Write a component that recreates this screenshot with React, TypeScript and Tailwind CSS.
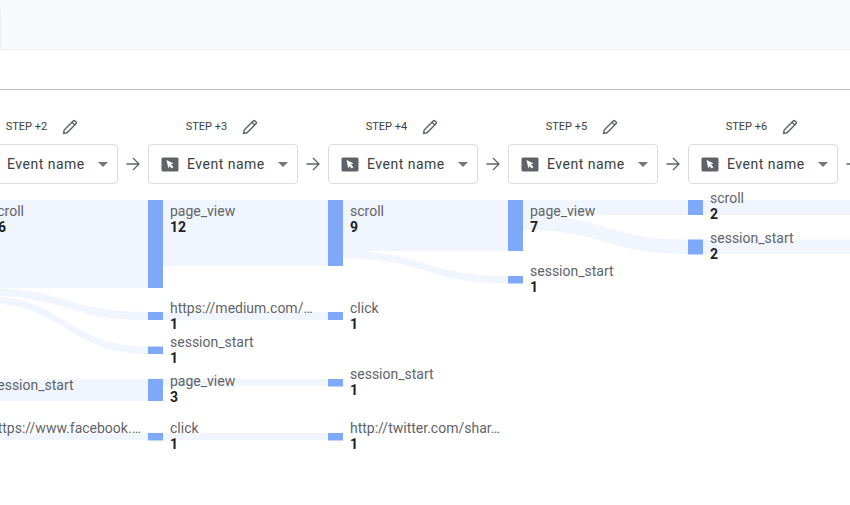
import React from 'react';

const steps = ['STEP +2', 'STEP +3', 'STEP +4', 'STEP +5', 'STEP +6'];

// x, y0 left, y1 left, y0 right, y1 right - all in page coordinates
const flows = [
  [-17, 200, 288, 148, 200, 288],
  [-17, 288, 295.5, 148, 312, 320],
  [-17, 295.5, 303, 148, 346.5, 354],
  [-17, 379, 401, 148, 379, 401],
  [-17, 433, 440, 148, 433, 440],
  [163, 200, 266, 328, 200, 266],
  [163, 312, 320, 328, 312, 320],
  [163, 379, 386, 328, 379, 386],
  [163, 433, 440, 328, 433, 440],
  [343, 200, 251, 508, 200, 251],
  [343, 251, 258.5, 508, 276, 283.5],
  [523, 200, 215, 688, 200, 215],
  [523, 215, 230, 688, 239.5, 254],
  [703, 200, 215, 868, 200, 215],
  [703, 239.5, 254, 868, 239.5, 254],
];

const nodes = [
  [148, 200, 88],
  [148, 312, 8],
  [148, 346.5, 7.5],
  [148, 379, 22],
  [148, 433, 7.5],
  [328, 200, 66],
  [328, 312, 8],
  [328, 379, 7.5],
  [328, 433, 7.5],
  [508, 200, 51],
  [508, 276, 7.5],
  [688, 200, 15],
  [688, 239.5, 15],
];

const labels: [number, number, string, string][] = [
  [-10, 211, 'scroll', '16'],
  [-10, 385, 'session_start', '3'],
  [-10, 428, 'https://www.facebook.…', '1'],
  [170, 211, 'page_view', '12'],
  [170, 308, 'https://medium.com/…', '1'],
  [170, 342, 'session_start', '1'],
  [170, 381, 'page_view', '3'],
  [170, 428, 'click', '1'],
  [350, 211, 'scroll', '9'],
  [350, 308, 'click', '1'],
  [350, 374, 'session_start', '1'],
  [350, 428, 'http://twitter.com/shar…', '1'],
  [530, 211, 'page_view', '7'],
  [530, 271, 'session_start', '1'],
  [710, 198, 'scroll', '2'],
  [710, 238, 'session_start', '2'],
];

function flowPath([x0, a0, a1, x1, b0, b1]: number[]) {
  const mid = (x0 + x1) / 2;
  return `M${x0} ${a0}C${mid} ${a0} ${mid} ${b0} ${x1} ${b0}L${x1} ${b1}C${mid} ${b1} ${mid} ${a1} ${x0} ${a1}Z`;
}

function PencilIcon() {
  return (
    <svg viewBox="0 0 16 16" className="mt-[2px] h-[16px] w-[16px] fill-none stroke-[#5f6368] stroke-[1.4]">
      <path d="M1.6 14.4L2.2 11L11.4 1.8C11.8 1.4 12.3 1.4 12.7 1.8L14.2 3.3C14.6 3.7 14.6 4.2 14.2 4.6L5 13.8Z" />
      <path d="M10 3.2L12.8 6" />
    </svg>
  );
}

function CursorIcon() {
  return (
    <svg viewBox="0 0 18 15" className="h-[15px] w-[18px]">
      <rect x="0.5" y="0.5" width="17" height="14" rx="1.5" fill="#5f6368" />
      <path d="M5.5 3L12.5 6.4L9.9 7.4L12.4 10L10.8 11.5L8.5 9L7.3 11.5Z" fill="#fff" />
    </svg>
  );
}

function ArrowIcon() {
  return (
    <svg viewBox="0 0 14 14" className="h-[14px] w-[14px] fill-none stroke-[#5f6368] stroke-[1.3]">
      <path d="M0.5 7H13M7 1L13 7L7 13" />
    </svg>
  );
}

function StepColumn({ label }: { label: string }) {
  return (
    <div className="flex flex-none">
      <div className="flex w-[150px] flex-col">
        <div className="flex h-[24px] items-center justify-center gap-[15px] pr-[2px]">
          <span className="mt-[2px] text-[11px] text-[#3c4043]">{label}</span>
          <PencilIcon />
        </div>
        <div className="mt-[6px] flex h-[40px] items-center rounded-[4px] border border-[#dadce0] bg-white pl-[12px] pr-[9px]">
          <CursorIcon />
          <span className="ml-[8px] flex-1 text-[14px] tracking-[0.5px] text-[#3c4043]">Event name</span>
          <span className="h-0 w-0 border-x-[5px] border-t-[5px] border-x-transparent border-t-[#757575]" />
        </div>
      </div>
      <div className="flex h-[40px] w-[30px] items-center justify-center self-end">
        <ArrowIcon />
      </div>
    </div>
  );
}

export default function App() {
  return (
    <div className="flex h-[505px] w-[850px] flex-col overflow-hidden bg-white font-['Roboto',sans-serif]">
      <div className="flex h-[50px] flex-none items-end border-b border-[#eceef0] bg-[#f8f9fa]">
        <div className="h-[40px] w-px bg-[#eceef0]" />
      </div>
      <div className="h-[40px] flex-none border-b border-[#bdbdbd]" />
      <div className="ml-[-32px] flex flex-none pt-[24px]">
        {steps.map((s) => (
          <StepColumn key={s} label={s} />
        ))}
      </div>
      <div className="relative flex-1">
        <svg viewBox="0 184 850 321" className="absolute left-0 top-0 h-[321px] w-[850px]">
          {flows.map((f, i) => (
            <path key={i} d={flowPath(f)} fill="#f1f5fe" />
          ))}
          {nodes.map(([x, y, h], i) => (
            <rect key={i} x={x} y={y} width={15} height={h} fill="#7fa9f8" />
          ))}
        </svg>
        {labels.map(([x, y, name, count]) => (
          <div
            key={`${x}-${y}`}
            className="absolute whitespace-nowrap text-[14px] leading-[16px]"
            style={{ left: x, top: y - 8 - 184 }}
          >
            <div className="text-[#5f6368]">{name}</div>
            <div className="font-bold text-[#202124]">{count}</div>
          </div>
        ))}
      </div>
    </div>
  );
}
